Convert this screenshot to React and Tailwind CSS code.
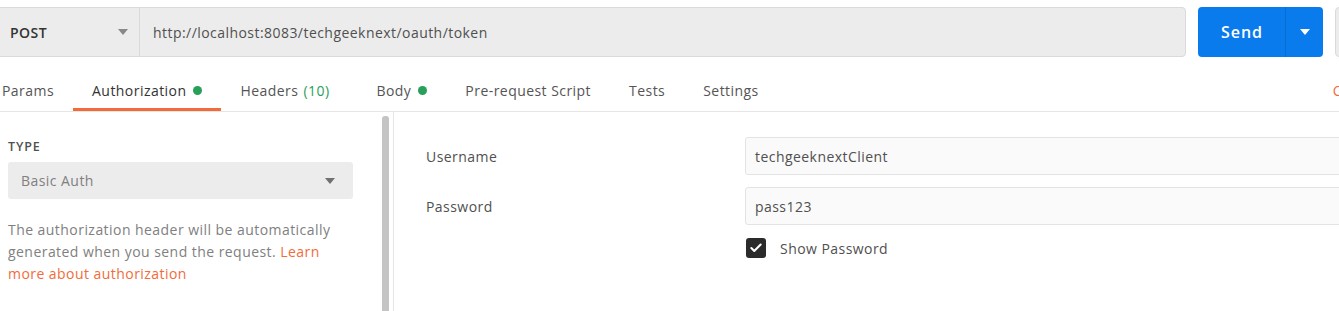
import { Check } from 'lucide-react';

function Caret({ className }) {
  return (
    <svg width="10" height="6" viewBox="0 0 10 6" className={className}>
      <path d="M0 0 L10 0 L5 6 Z" fill="currentColor" />
    </svg>
  );
}

function Dot() {
  return <span className="ml-[7px] inline-block h-[9px] w-[9px] rounded-full bg-[#27a05a]" />;
}

const tabs = [
  { label: 'Params', cls: '-ml-[17px]' },
  { label: 'Authorization', dot: true, active: true },
  { label: 'Headers', count: '(10)', cls: 'mr-[9px]' },
  { label: 'Body', dot: true },
  { label: 'Pre-request Script' },
  { label: 'Tests' },
  { label: 'Settings' },
];

export default function App() {
  return (
    <div className="w-[1339px] h-[311px] overflow-hidden bg-white font-['Open_Sans',sans-serif] text-[14px] tracking-[0.45px] text-[#505050]">
      {/* request bar */}
      <div className="flex h-[57px] pt-[7px]">
        <div className="-ml-px flex w-[1187px] shrink-0 rounded-r-[4px] border border-[#dadada] bg-[#ececec]">
          <div className="flex w-[140px] items-center justify-between border-r border-[#dadada] pl-[10px] pr-[11px]">
            <span className="font-semibold text-[#333]">POST</span>
            <Caret className="text-[#888]" />
          </div>
          <div className="flex items-center pl-[13px] text-[#505050]">
            http://localhost:8083/techgeeknext/oauth/token
          </div>
        </div>
        <div className="ml-[12px] flex w-[125px] shrink-0 rounded-[4px] bg-[#097bed] text-white">
          <div className="flex w-[87px] items-center justify-center pl-[1px] text-[16px] font-semibold tracking-[1px]">Send</div>
          <div className="w-px bg-[#0a6bd3]" />
          <div className="flex flex-1 items-center justify-center">
            <Caret className="text-white" />
          </div>
        </div>
        <div className="ml-[12px] w-[40px] shrink-0 rounded-l-[4px] border border-[#dadada] bg-[#ececec]" />
      </div>

      {/* tabs */}
      <div className="flex h-[55px] items-end border-b border-[#e6e6e6]">
        {tabs.map((t) => (
          <div
            key={t.label}
            className={`flex h-[40px] shrink-0 items-center border-b-[3px] px-[19px] pt-px ${
              t.active ? 'border-[#f26b3a] text-[#333]' : 'border-transparent text-[#555]'
            } ${t.cls || ''}`}
          >
            {t.label}
            {t.count && <span className="ml-[5px] text-[#27a05a]">{t.count}</span>}
            {t.dot && <Dot />}
          </div>
        ))}
        <div className="ml-auto mr-[-48px] flex h-[40px] shrink-0 items-center border-b-[3px] border-transparent pt-px text-[#f26b3a]">
          Cookies
        </div>
      </div>

      {/* body */}
      <div className="flex h-[199px]">
        <div className="flex w-[394px] shrink-0 border-r border-[#e6e6e6]">
          <div className="ml-[8px] w-[345px] pt-[27px]">
            <div className="text-[12.5px] font-semibold leading-[16px] tracking-[0.9px] text-[#505050]">TYPE</div>
            <div className="mt-[7px] flex h-[37px] items-center justify-between rounded-[3px] bg-[#ececec] pl-[13px] pr-[18px] text-[#808080]">
              <span>Basic Auth</span>
              <Caret className="text-[#707070]" />
            </div>
            <p className="mt-[20px] leading-[22px] text-[#808080]">
              The authorization header will be automatically generated when you send the request.{' '}
              <span className="text-[#f26b3a]">Learn more about authorization</span>
            </p>
          </div>
          <div className="ml-auto mr-[4px] mt-[4px] w-[7px] rounded-t-[3px] bg-[#c4c4c4]" />
        </div>

        <div className="flex-1 pl-[32px] pt-[25px]">
          <div className="grid grid-cols-[319px_1fr] items-center gap-y-[12px]">
            <div>Username</div>
            <div className="mr-[-10px] flex h-[38px] items-center rounded-l-[3px] border border-[#e3e3e3] bg-[#fafafa] pl-[9px] text-[#505050]">
              techgeeknextClient
            </div>
            <div>Password</div>
            <div className="mr-[-10px] flex h-[38px] items-center rounded-l-[3px] border border-[#e3e3e3] bg-[#fafafa] pl-[9px] text-[#505050]">
              pass123
            </div>
            <div />
            <div className="flex h-[21px] items-center pt-px leading-[20px]">
              <span className="ml-px flex h-[20px] w-[20px] items-center justify-center rounded-[3px] bg-[#2b2b2b]">
                <Check size={14} strokeWidth={3.5} className="text-white" />
              </span>
              <span className="ml-[14px] pt-px">Show Password</span>
            </div>
          </div>
        </div>
      </div>
    </div>
  );
}
